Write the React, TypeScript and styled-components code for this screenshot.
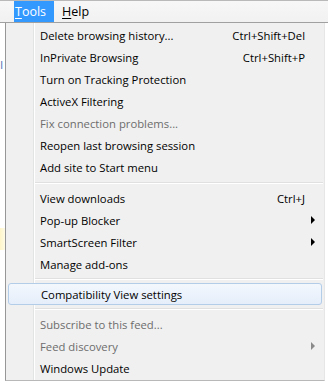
import React from "react";
import styled, { createGlobalStyle } from "styled-components";

const Global = createGlobalStyle`
  html, body { margin: 0; padding: 0; background: #fff; }
  body { width: 328px; height: 387px; overflow: hidden; font-family: "Open Sans", "Noto Sans", sans-serif; }
`;

const Screen = styled.div`
  width: 328px;
  height: 387px;
  background: #fff;
  display: flex;
  flex-direction: column;
  overflow: hidden;
`;

const MenuBar = styled.div`
  height: 21px;
  border-top: 1px solid #b9b9b9;
  border-bottom: 1px solid #a0a0a0;
  background: linear-gradient(#f7f7f7, #f1f1f1);
  display: flex;
  align-items: stretch;
  padding-left: 14px;
  gap: 4px;
`;

const BarItem = styled.div<{ $active?: boolean }>`
  display: flex;
  align-items: center;
  padding: ${(p) => (p.$active ? "0 8px 0 1px" : "0 4px")};
  font-size: 12.5px;
  color: ${(p) => (p.$active ? "#fff" : "#000")};
  background: ${(p) => (p.$active ? "#3399ff" : "transparent")};
  u { text-decoration: underline; text-underline-offset: 2px; }
`;

const Body = styled.div`
  display: flex;
  flex: 1;
  align-items: flex-start;
`;

const Strip = styled.div`
  width: 5px;
  align-self: stretch;
  overflow: hidden;
  display: flex;
  flex-direction: column;
`;

const StripText = styled.div`
  margin-top: 34px;
  margin-left: -14px;
  font-size: 11px;
  color: #4a6fb5;
  white-space: nowrap;
`;

const StripGlow = styled.div`
  margin-top: 156px;
  height: 22px;
  width: 5px;
  background: linear-gradient(to right, #fff6c8, #fffbe6);
`;

const Menu = styled.div`
  width: 318px;
  border-left: 1px solid #979797;
  border-right: 1px solid #e6e6e6;
  border-bottom: 1px solid #b8b8b8;
  padding: 1px 0;
  background-color: #f0f0f0;
  background-image: linear-gradient(
    to right,
    transparent 27px,
    #e2e3e3 27px,
    #e2e3e3 28px,
    #ffffff 28px,
    #ffffff 29px,
    transparent 29px
  );
  display: flex;
  flex-direction: column;
`;

const Item = styled.div<{ $disabled?: boolean; $hover?: boolean }>`
  height: 22px;
  box-sizing: border-box;
  display: flex;
  align-items: center;
  padding-left: ${(p) => (p.$hover ? "32px" : "34px")};
  margin: ${(p) => (p.$hover ? "0 2px" : "0")};
  font-size: 11.3px;
  color: ${(p) => (p.$disabled ? "#6d6d6d" : "#000")};
  border: ${(p) => (p.$hover ? "1px solid #b3cde9" : "none")};
  border-radius: 3px;
  background: ${(p) =>
    p.$hover ? "linear-gradient(#f3f8fd, #e5eefa)" : "transparent"};
  white-space: nowrap;
`;

const Label = styled.span`
  flex: 1;
`;

const Shortcut = styled.span`
  margin-right: 19px;
`;

const Arrow = styled.span<{ $disabled?: boolean }>`
  width: 0;
  height: 0;
  margin-right: 9px;
  border-top: 4px solid transparent;
  border-bottom: 4px solid transparent;
  border-left: 4px solid ${(p) => (p.$disabled ? "#8a8a8a" : "#000")};
`;

const Separator = styled.div<{ $h: number }>`
  height: ${(p) => p.$h}px;
  display: flex;
  flex-direction: column;
  justify-content: center;
  padding-left: 29px;
  padding-right: 1px;
  &::before {
    content: "";
    height: 1px;
    background: #e0e0e0;
  }
  &::after {
    content: "";
    height: 1px;
    background: #fff;
  }
`;

type Entry =
  | { sep: number }
  | { label: string; shortcut?: string; sub?: boolean; disabled?: boolean; hover?: boolean };

const entries: Entry[] = [
  { label: "Delete browsing history...", shortcut: "Ctrl+Shift+Del" },
  { label: "InPrivate Browsing", shortcut: "Ctrl+Shift+P" },
  { label: "Turn on Tracking Protection" },
  { label: "ActiveX Filtering" },
  { label: "Fix connection problems...", disabled: true },
  { label: "Reopen last browsing session" },
  { label: "Add site to Start menu" },
  { sep: 9 },
  { label: "View downloads", shortcut: "Ctrl+J" },
  { label: "Pop-up Blocker", sub: true },
  { label: "SmartScreen Filter", sub: true },
  { label: "Manage add-ons" },
  { sep: 8 },
  { label: "Compatibility View settings", hover: true },
  { sep: 8 },
  { label: "Subscribe to this feed...", disabled: true },
  { label: "Feed discovery", disabled: true, sub: true },
  { label: "Windows Update" },
];

export default function App() {
  return (
    <Screen>
      <Global />
      <MenuBar>
        <BarItem $active>
          <span>
            <u>T</u>ools
          </span>
        </BarItem>
        <BarItem>
          <span>
            <u>H</u>elp
          </span>
        </BarItem>
      </MenuBar>
      <Body>
        <Strip>
          <StripText>Del</StripText>
          <StripGlow />
        </Strip>
        <Menu>
          {entries.map((e, i) =>
            "sep" in e ? (
              <Separator key={i} $h={e.sep} />
            ) : (
              <Item key={i} $disabled={e.disabled} $hover={e.hover}>
                <Label>{e.label}</Label>
                {e.shortcut && <Shortcut>{e.shortcut}</Shortcut>}
                {e.sub && <Arrow $disabled={e.disabled} />}
              </Item>
            )
          )}
        </Menu>
      </Body>
    </Screen>
  );
}
